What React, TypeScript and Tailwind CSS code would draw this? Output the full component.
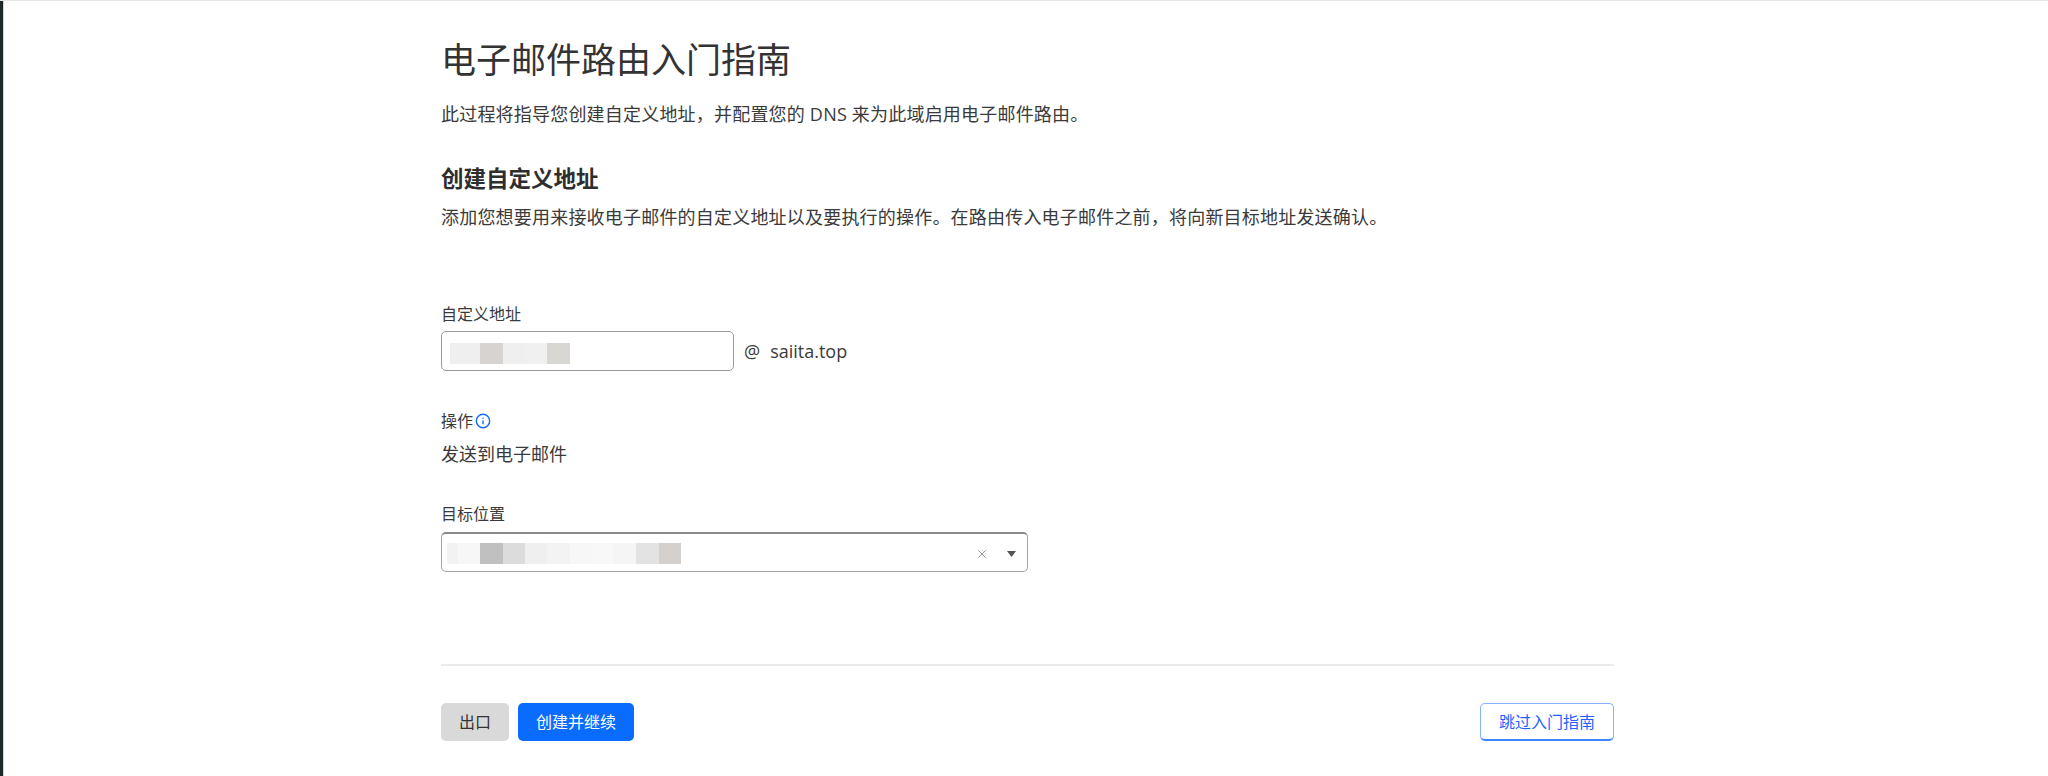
import { Info, X } from "lucide-react";

const inputBlocks = [
  { w: 30, c: "#efefef" },
  { w: 23, c: "#d6d3d1" },
  { w: 23, c: "#efefef" },
  { w: 21, c: "#f0f0f0" },
  { w: 23, c: "#d9d7d3" },
];

const selectBlocks = [
  { w: 11, c: "#f2f2f2" },
  { w: 22, c: "#f7f7f7" },
  { w: 23, c: "#c0c0c0" },
  { w: 22, c: "#dcdcdc" },
  { w: 22, c: "#efefef" },
  { w: 23, c: "#f3f3f3" },
  { w: 22, c: "#f7f7f7" },
  { w: 22, c: "#f8f8f8" },
  { w: 22, c: "#f5f5f5" },
  { w: 23, c: "#e3e3e3" },
  { w: 22, c: "#d3d0ce" },
];

// redacted value, drawn as a mosaic
function Mosaic({ blocks }: { blocks: { w: number; c: string }[] }) {
  return (
    <div className="flex h-[21px]">
      {blocks.map((b, i) => (
        <div key={i} style={{ width: b.w, backgroundColor: b.c }} />
      ))}
    </div>
  );
}

export default function App() {
  return (
    <div
      className="flex min-h-[776px] bg-white border-t border-[#e6e6e6]"
      style={{ fontFamily: '"Open Sans", "Noto Sans CJK SC", sans-serif' }}
    >
      <div className="w-[3px] bg-[#1e2828]" />
      <div className="flex-1 border-l border-[#cfd6d6]">
        <div className="ml-[437px] w-[1173px] pt-[37px] flex flex-col">
          {/* Header */}
          <h1 className="text-[35px] leading-[44px] font-normal text-[#333333]">
            电子邮件路由入门指南
          </h1>
          <p className="mt-[18px] text-[18px] leading-[28px] tracking-[0.2px] text-[#3a3a3a]">
            此过程将指导您创建自定义地址，并配置您的 DNS 来为此域启用电子邮件路由。
          </p>

          <h2 className="mt-[35px] text-[22.5px] leading-[32px] font-bold text-[#2e2e2e]">
            创建自定义地址
          </h2>
          <p className="mt-[8px] text-[18px] leading-[28px] tracking-[0.2px] text-[#3a3a3a]">
            添加您想要用来接收电子邮件的自定义地址以及要执行的操作。在路由传入电子邮件之前，将向新目标地址发送确认。
          </p>

          {/* Custom address */}
          <label className="mt-[71px] text-[16px] leading-[24px] text-[#3a3a3a]">自定义地址</label>
          <div className="mt-[5px] flex items-center">
            <div className="w-[293px] h-[40px] rounded-[5px] border border-[#9a9a9a] flex items-center pl-[8px] pt-[5px]">
              <Mosaic blocks={inputBlocks} />
            </div>
            <span className="ml-[10px] text-[18px] text-[#3a3a3a]">@</span>
            <span className="ml-[10px] text-[18px] text-[#3a3a3a]">saiita.top</span>
          </div>

          {/* Action */}
          <div className="mt-[38px] flex items-center gap-[2px] text-[16px] leading-[24px] text-[#3a3a3a]">
            操作
            <Info className="w-[16px] h-[16px] text-[#1a6eff]" strokeWidth={2.2} />
          </div>
          <p className="mt-[7px] text-[18px] leading-[28px] text-[#3a3a3a]">发送到电子邮件</p>

          {/* Destination */}
          <label className="mt-[34px] text-[16px] leading-[24px] text-[#3a3a3a]">目标位置</label>
          <div className="mt-[6px] w-[587px] h-[40px] rounded-[5px] border border-[#a3a3a3] border-t-[#8a8a8a] border-t-2 flex items-center pl-[5px] pr-[11px] pt-[2px]">
            <Mosaic blocks={selectBlocks} />
            <div className="ml-auto flex items-center gap-[18px]">
              <X className="w-[14px] h-[14px] text-[#8a8a8a]" strokeWidth={1.5} />
              <svg width="9" height="6" viewBox="0 0 9 6">
                <path d="M0 0 L9 0 L4.5 6 Z" fill="#555555" />
              </svg>
            </div>
          </div>

          <div className="mt-[92px] h-[2px] bg-[#ebebeb]" />

          {/* Footer buttons */}
          <div className="mt-[37px] flex items-center justify-between">
            <div className="flex items-center gap-[9px]">
              <button className="h-[38px] px-[18px] rounded-[5px] bg-[#d9d9d9] text-[16px] text-[#333333]">
                出口
              </button>
              <button className="h-[38px] px-[18px] rounded-[5px] bg-[#0a6cff] text-[16px] text-white">
                创建并继续
              </button>
            </div>
            <button className="h-[38px] px-[18px] rounded-[5px] bg-white border border-[#86b3ff] border-b-2 border-b-[#3d86ff] text-[16px] text-[#1f63ff]">
              跳过入门指南
            </button>
          </div>
        </div>
      </div>
    </div>
  );
}
